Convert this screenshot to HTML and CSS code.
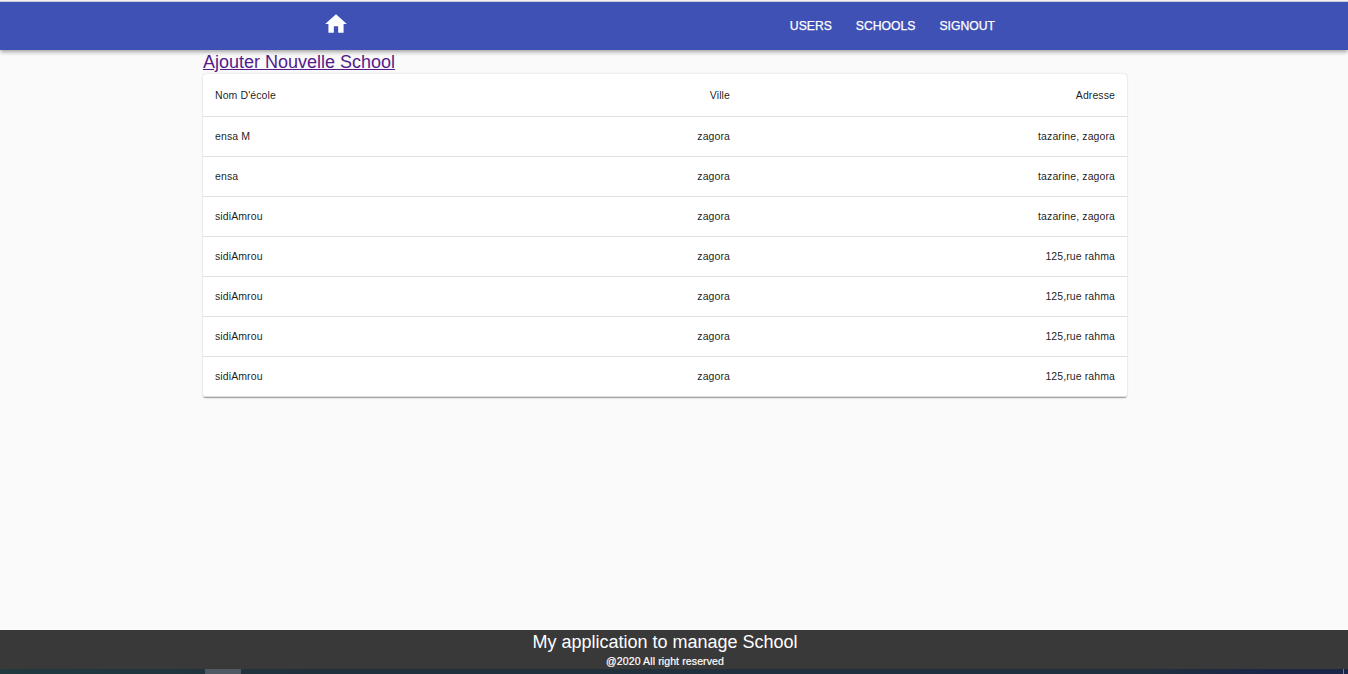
FILE: index.html
```html
<!DOCTYPE html>
<html lang="fr">
<head>
<meta charset="utf-8">
<title>Schools</title>
<link rel="stylesheet" href="styles.css">
</head>
<body>
<header class="appbar">
  <a class="home" aria-label="Home"><svg viewBox="0 0 24 24"><path d="M10 20v-6h4v6h5v-8h3L12 3 2 12h3v8z"/></svg></a>
  <nav class="nav"><a class="users">USERS</a><a class="schools">SCHOOLS</a><a class="signout">SIGNOUT</a></nav>
</header>
<main class="content">
  <a class="add" href="#">Ajouter Nouvelle School</a>
  <table class="table">
    <thead><tr><th class="name">Nom D'école</th><th class="city">Ville</th><th class="address">Adresse</th></tr></thead>
    <tbody>
      <tr><td>ensa M</td><td>zagora</td><td>tazarine, zagora</td></tr>
      <tr><td>ensa</td><td>zagora</td><td>tazarine, zagora</td></tr>
      <tr><td>sidiAmrou</td><td>zagora</td><td>tazarine, zagora</td></tr>
      <tr><td>sidiAmrou</td><td>zagora</td><td>125,rue rahma</td></tr>
      <tr><td>sidiAmrou</td><td>zagora</td><td>125,rue rahma</td></tr>
      <tr><td>sidiAmrou</td><td>zagora</td><td>125,rue rahma</td></tr>
      <tr><td>sidiAmrou</td><td>zagora</td><td>125,rue rahma</td></tr>
    </tbody>
  </table>
</main>
<footer class="footer">
  <div class="footer-title">My application to manage School</div>
  <div class="footer-note">@2020 All right reserved</div>
</footer>
<div class="taskbar"><span class="task"></span><span class="edge"></span></div>
</body>
</html>
```
FILE: styles.css
```css
* { box-sizing: border-box; }
body {
  margin: 0;
  height: 674px;
  display: flex;
  flex-direction: column;
  overflow: hidden;
  background: #fafafa;
  font-family: "Liberation Sans", Arial, sans-serif;
  color: rgba(0, 0, 0, 0.9);
  border-top: 1px solid #f1f1f3;
}
.appbar {
  height: 49px;
  flex: none;
  display: flex;
  justify-content: space-between;
  padding: 0 353px 0 323px;
  background: #3f51b5;
  border-top: 1px solid #c9cbd6;
  box-shadow: 0 1.5px 3px -0.75px rgba(0, 0, 0, 0.2), 0 3px 3.75px rgba(0, 0, 0, 0.14), 0 0.75px 7.5px rgba(0, 0, 0, 0.12);
  position: relative;
}
.home { padding-top: 9px; }
.home svg { display: block; width: 26px; height: 26px; fill: #fff; }
.nav {
  display: flex;
  gap: 24px;
  color: #fff;
  font-size: 12.2px;
  line-height: 48px;
  -webkit-text-stroke: 0.25px #fff;
}
.content {
  flex: 1;
  width: 924px;
  margin-left: 203px;
}
.add {
  display: block;
  width: max-content;
  height: 24px;
  font-size: 18px;
  line-height: 24px;
  color: #551a8b;
}
.table {
  width: 924px;
  table-layout: fixed;
  border-collapse: separate;
  border-spacing: 0;
  background: #fff;
  border-radius: 3px;
  box-shadow: 0 1.5px 0.75px -0.75px rgba(0, 0, 0, 0.2), 0 0.75px 0.75px rgba(0, 0, 0, 0.14), 0 0.75px 2.25px rgba(0, 0, 0, 0.12);
  font-size: 10.5px;
  letter-spacing: 0.1px;
}
.table th, .table td {
  height: 40px;
  padding: 0 12px;
  font-weight: 400;
  text-align: right;
  border-bottom: 1px solid #e0e0e0;
}
.table td { padding-bottom: 2px; }
.table th { height: 43px; }
.table th:first-child, .table td:first-child { text-align: left; }
.name { width: 330px; }
.city { width: 209px; }
.footer {
  height: 39px;
  flex: none;
  padding-right: 18px;
  background: #393939;
  color: #fff;
  text-align: center;
}
.footer-title { font-size: 18px; line-height: 24px; }
.footer-note {
  font-size: 10.5px;
  line-height: 14px;
  letter-spacing: 0.12px;
  -webkit-text-stroke: 0.2px #fff;
}
.taskbar {
  height: 5px;
  flex: none;
  display: flex;
  justify-content: space-between;
  padding: 0 4px 0 205px;
  background: linear-gradient(90deg, #203a40, #20303c 25%, #20303f 85%, #1b2547 94%);
}
.task { width: 36px; background: #4e5964; }
.edge { width: 1px; background: #747b8c; }
```
